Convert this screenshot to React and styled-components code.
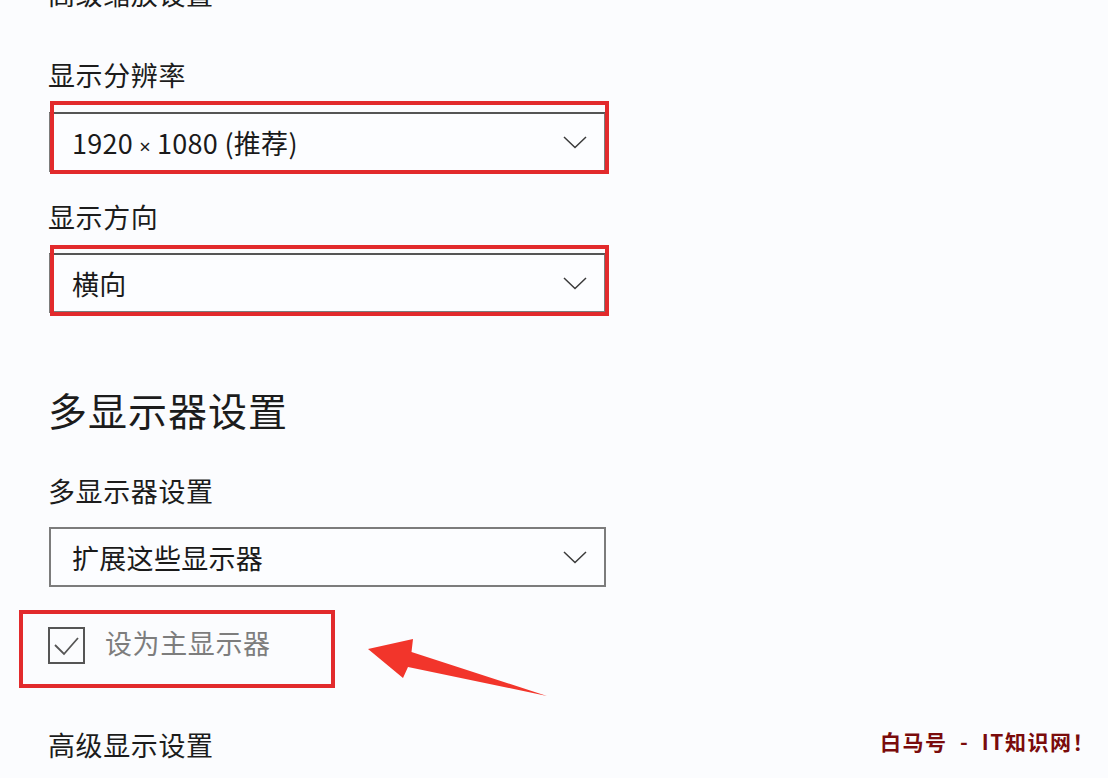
import React from 'react'
import styled, { createGlobalStyle } from 'styled-components'

const GlobalStyle = createGlobalStyle`
  html, body {
    margin: 0;
    padding: 0;
    background: #fbfcfe;
  }
  body {
    font-family: "Noto Sans CJK SC", "Noto Sans", sans-serif;
    overflow: hidden;
  }
`

const Page = styled.div`
  position: relative;
  width: 1108px;
  height: 778px;
  overflow: hidden;
  background: #fbfcfe;
  display: flex;
  flex-direction: column;
  padding-left: 48px;
  box-sizing: border-box;
`

const Label = styled.div`
  font-size: 27px;
  line-height: 36px;
  color: #1c1c1c;
  margin-top: ${(p) => p.gap}px;
  letter-spacing: 0.6px;
`

const Heading = styled.h2`
  margin: 0;
  margin-top: ${(p) => p.gap}px;
  font-size: 39px;
  line-height: 52px;
  font-weight: 400;
  color: #1c1c1c;
  letter-spacing: 1px;
`

const Field = styled.div`
  position: relative;
  width: 557px;
  margin-left: 1px;
  margin-top: ${(p) => p.gap}px;
`

const Select = styled.div`
  height: 60px;
  box-sizing: border-box;
  border: 2px solid #7c7c7c;
  border-top-color: ${(p) => (p.marked ? '#555' : '#7c7c7c')};
  background: #fcfdff;
  display: flex;
  align-items: center;
  justify-content: space-between;
  padding: 0 17px 0 21px;
  font-size: 27px;
  color: #1a1a1a;
  letter-spacing: 0.3px;
`

const Times = styled.span`
  font-family: "Noto Sans", sans-serif;
  font-size: 20px;
  margin: 0 6px;
`

const Mark = styled.div`
  position: absolute;
  left: ${(p) => p.l}px;
  top: ${(p) => p.t}px;
  right: ${(p) => p.r}px;
  bottom: ${(p) => p.b}px;
  border: 4px solid #e22a2c;
  pointer-events: none;
`

const CheckRow = styled.div`
  position: relative;
  display: flex;
  align-items: center;
  gap: 20px;
  height: 36px;
  margin-top: ${(p) => p.gap}px;
  width: 287px;
`

const Box = styled.div`
  width: 37px;
  height: 37px;
  box-sizing: border-box;
  border: 2px solid #555;
  display: flex;
  align-items: center;
  justify-content: center;
`

const CheckText = styled.span`
  font-size: 27px;
  line-height: 36px;
  margin-top: -4px;
  color: #7d7d7d;
  letter-spacing: 0.6px;
`

const Watermark = styled.div`
  position: absolute;
  left: 880px;
  top: 726px;
  font-size: 21px;
  font-weight: 700;
  color: #7a0b0b;
  letter-spacing: 1.5px;
  white-space: pre;
`

const Arrow = styled.svg`
  position: absolute;
  left: 0;
  top: 0;
  pointer-events: none;
`

const Chevron = () => (
  <svg width="24" height="13" viewBox="0 0 24 13">
    <polyline points="1,1 12,11.5 23,1" fill="none" stroke="#3a3a3a" strokeWidth="1.5" />
  </svg>
)

export default function App() {
  return (
    <>
      <GlobalStyle />
      <Page>
        <Label gap={-24}>高级缩放设置</Label>
        <Label gap={45}>显示分辨率</Label>
        <Field gap={19}>
          <Select marked>
            <span>
              1920<Times>×</Times>1080 (推荐)
            </span>
            <Chevron />
          </Select>
          <Mark l={1} t={-11} r={-3} b={-2} />
        </Field>
        <Label gap={27}>显示方向</Label>
        <Field gap={18}>
          <Select marked>
            <span>横向</span>
            <Chevron />
          </Select>
          <Mark l={1} t={-8} r={-3} b={-3} />
        </Field>
        <Heading gap={70}>多显示器设置</Heading>
        <Label gap={38}>多显示器设置</Label>
        <Field gap={18}>
          <Select>
            <span>扩展这些显示器</span>
            <Chevron />
          </Select>
        </Field>
        <CheckRow gap={40}>
          <Box>
            <svg width="33" height="33" viewBox="0 0 33 33">
              <polyline points="5,16 14,25 28,9" fill="none" stroke="#555" strokeWidth="1.8" />
            </svg>
          </Box>
          <CheckText>设为主显示器</CheckText>
          <Mark l={-29} t={-17} r={0} b={-25} />
        </CheckRow>
        <Label gap={64}>高级显示设置</Label>
        <Arrow width="1108" height="778" viewBox="0 0 1108 778">
          <polygon
            points="368,649 413,639 411.5,652 547,696 408,667 403,678"
            fill="#f2352b"
          />
        </Arrow>
        <Watermark>白马号  -  IT知识网！</Watermark>
      </Page>
    </>
  )
}
